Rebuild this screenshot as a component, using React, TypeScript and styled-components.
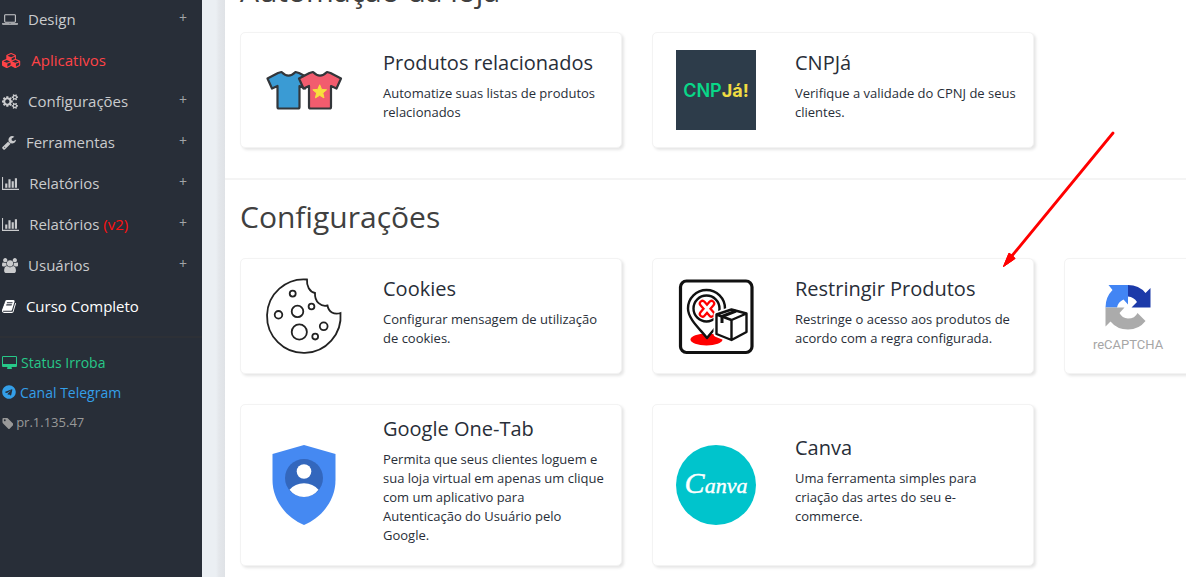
import React from "react";
import styled, { createGlobalStyle } from "styled-components";
import { FaTelegram } from "react-icons/fa";

const GlobalStyle = createGlobalStyle`
  * { box-sizing: border-box; }
  body {
    margin: 0;
    background: #fff;
    color: #282e38;
    font-family: "Open Sans", "Noto Sans", sans-serif;
    font-size: 13px;
  }
  a { color: inherit; text-decoration: none; }
`;

/* ---------- layout ---------- */

const Page = styled.div`
  display: flex;
  height: 100vh;
  overflow: hidden;
`;

const Sidebar = styled.aside`
  flex: none;
  width: 202px;
  background: #282e38;
`;

const Gutter = styled.div`
  flex: none;
  width: 23px;
  background: linear-gradient(to right, #ebeff3 0 14px, #e4e7eb 17px, #dfe2e6 23px);
`;

const Main = styled.main`
  flex: 1;
  min-width: 0;
  overflow: hidden;
`;

/* The list is scrolled, so its first heading is cut by the window's top. */
const Scrolled = styled.div`
  margin-top: -46px;
`;

/* ---------- sidebar ---------- */

const Menu = styled.ul`
  list-style: none;
  margin: 0;
  padding: 0 15px 8px 2px;
  border-bottom: 2px solid #2d3036;
`;

const MenuLink = styled.a<{ $tone?: string }>`
  display: flex;
  align-items: center;
  height: 41px;
  padding-bottom: 4px;
  gap: 10px;
  font-size: 15px;
  line-height: 20px;
  color: ${(p) => p.$tone ?? "#cacbcd"};
`;

const MenuText = styled.span`
  flex: 1;
  white-space: nowrap;
`;

const Version = styled.span`
  color: #f11;
`;

const Plus = styled.span`
  align-self: flex-start;
  margin-top: 8px;
  font-size: 14px;
  color: #a2a4a8;
`;

const Extras = styled.div`
  display: flex;
  flex-direction: column;
  padding: 9px 2px;
`;

const ExtraLink = styled.a<{ $tone: string; $small?: boolean }>`
  display: flex;
  align-items: center;
  gap: ${(p) => (p.$small ? 3 : 4)}px;
  height: 30px;
  font-size: ${(p) => (p.$small ? 13 : 14)}px;
  color: ${(p) => p.$tone};
`;

/* ---------- sections ---------- */

const Section = styled.section`
  padding: 12px 0 30px 15px;
  & + & {
    border-top: 2px solid #f4f4f4;
  }
`;

const Heading = styled.h2`
  margin: 0 0 22px;
  padding-top: 6px;
  font-size: 30px;
  line-height: 38px;
  font-weight: 400;
  color: #404040;
`;

const Grid = styled.div`
  display: grid;
  grid-template-columns: repeat(3, 382px);
  gap: 30px;
`;

const Card = styled.a`
  position: relative;
  display: flex;
  align-items: center;
  min-height: 116px;
  padding: 13px 16px 13px 23px;
  border: 1px solid #f3f3f3;
  border-radius: 5px;
  background: #fff;
  box-shadow: 2px 2px 3px #e6e6e6;
`;

const Picture = styled.div`
  flex: none;
  width: 80px;
  height: 80px;
  margin-right: 39px;
  svg { display: block; }
`;

const CardTitle = styled.h3`
  margin: 0 0 10px;
  font-size: 20px;
  line-height: 22px;
  font-weight: 400;
`;

const CardText = styled.p`
  margin: 0 0 7px;
  font-size: 13px;
  line-height: 19px;
`;

const Pointer = styled.svg`
  position: absolute;
  top: -130px;
  right: -88px;
  z-index: 1;
  pointer-events: none;
`;

/* ---------- menu icons ---------- */

type Glyph = { w: number; d: string; x?: number };

const glyphs: Record<string, Glyph> = {
  laptop: {
    w: 1920,
    d: "M416 1280q-66 0-113-47t-47-113v-704q0-66 47-113t113-47h1088q66 0 113 47t47 113v704q0 66-47 113t-113 47h-1088zm-32-864v704q0 13 9.5 22.5t22.5 9.5h1088q13 0 22.5-9.5t9.5-22.5v-704q0-13-9.5-22.5t-22.5-9.5h-1088q-13 0-22.5 9.5t-9.5 22.5zm1376 928h160v96q0 40-47 68t-113 28h-1600q-66 0-113-28t-47-68v-96h1760zm-720 96q16 0 16-16t-16-16h-160q-16 0-16 16t16 16h160z",
  },
  cubes: {
    w: 2304,
    d: "M640 1632l384-192v-314l-384 164v342zm-64-454l404-173-404-173-404 173zm1088 454l384-192v-314l-384 164v342zm-64-454l404-173-404-173-404 173zm-448-293l384-165v-266l-384 164v267zm-64-379l441-189-441-189-441 189zm1088 518v416q0 36-19 67t-52 47l-448 224q-25 14-57 14t-57-14l-448-224q-4-2-7-4-2 2-7 4l-448 224q-25 14-57 14t-57-14l-448-224q-33-16-52-47t-19-67v-416q0-38 21.5-70t56.5-48l434-186v-400q0-38 21.5-70t56.5-48l448-192q23-10 50-10t50 10l448 192q35 16 56.5 48t21.5 70v400l434 186q36 16 57 48t21 70z",
  },
  cogs: {
    w: 1920,
    d: "M896 896q0-106-75-181t-181-75-181 75-75 181 75 181 181 75 181-75 75-181zm768 512q0-52-38-90t-90-38-90 38-38 90q0 53 37.5 90.5t90.5 37.5 90.5-37.5 37.5-90.5zm0-1024q0-52-38-90t-90-38-90 38-38 90q0 53 37.5 90.5t90.5 37.5 90.5-37.5 37.5-90.5zm-384 421v185q0 10-7 19.5t-16 10.5l-155 24q-11 35-32 76 34 48 90 115 7 11 7 20 0 12-7 19-23 30-82.5 89.5t-78.5 59.5q-11 0-21-7l-115-90q-37 19-77 31-11 108-23 155-7 24-30 24h-186q-11 0-20-7.5t-10-17.5l-23-153q-34-10-75-31l-118 89q-7 7-20 7-11 0-21-8-144-133-144-160 0-9 7-19 10-14 41-53t47-61q-23-44-35-82l-152-24q-10-1-17-9.5t-7-19.5v-185q0-10 7-19.5t16-10.5l155-24q11-35 32-76-34-48-90-115-7-11-7-20 0-12 7-20 22-30 82-89t79-59q11 0 21 7l115 90q34-18 77-32 11-108 23-154 7-24 30-24h186q11 0 20 7.5t10 17.5l23 153q34 10 75 31l118-89q8-7 20-7 11 0 21 8 144 133 144 160 0 8-7 19-12 16-42 54t-45 60q23 48 34 82l152 23q10 2 17 10.5t7 19.5zm640 533v140q0 16-149 31-12 27-30 52 51 113 51 138 0 4-4 7-122 71-124 71-8 0-46-47t-52-68q-20 2-30 2t-30-2q-14 21-52 68t-46 47q-2 0-124-71-4-3-4-7 0-25 51-138-18-25-30-52-149-15-149-31v-140q0-16 149-31 13-29 30-52-51-113-51-138 0-4 4-7 4-2 35-20t59-34 30-16q8 0 46 46.5t52 67.5q20-2 30-2t30 2q51-71 92-112l6-2q4 0 124 70 4 3 4 7 0 25-51 138 17 23 30 52 149 15 149 31zm0-1024v140q0 16-149 31-12 27-30 52 51 113 51 138 0 4-4 7-122 71-124 71-8 0-46-47t-52-68q-20 2-30 2t-30-2q-14 21-52 68t-46 47q-2 0-124-71-4-3-4-7 0-25 51-138-18-25-30-52-149-15-149-31v-140q0-16 149-31 13-29 30-52-51-113-51-138 0-4 4-7 4-2 35-20t59-34 30-16q8 0 46 46.5t52 67.5q20-2 30-2t30 2q51-71 92-112l6-2q4 0 124 70 4 3 4 7 0 25-51 138 17 23 30 52 149 15 149 31z",
  },
  wrench: {
    w: 1664,
    x: 64,
    d: "M448 1472q0-26-19-45t-45-19-45 19-19 45 19 45 45 19 45-19 19-45zm644-420l-682 682q-37 37-90 37-52 0-91-37l-106-108q-38-36-38-90 0-53 38-91l681-681q39 98 114.5 173.5t173.5 114.5zm634-435q0 39-23 106-47 134-164.5 217.5t-258.5 83.5q-185 0-316.5-131.5t-131.5-316.5 131.5-316.5 316.5-131.5q58 0 121.5 16.5t107.5 46.5q16 11 16 28t-16 28l-293 169v224l193 107q5-3 79-48.5t135.5-81 70.5-35.5q15 0 23.5 10t8.5 25z",
  },
  chart: {
    w: 2048,
    d: "M640 896v512h-256v-512h256zm384-512v1024h-256v-1024h256zm1024 1152v128h-2048v-1536h128v1408h1920zm-640-896v768h-256v-768h256zm384-384v1152h-256v-1152h256z",
  },
  users: {
    w: 1920,
    d: "M593 896q-162 5-265 128h-134q-82 0-138-40.5t-56-118.5q0-353 124-353 6 0 43.5 21t97.5 42.5 119 21.5q67 0 133-23-5 37-5 66 0 159 93 256zm1071 637q0 120-73 189.5t-194 69.5h-874q-121 0-194-69.5t-73-189.5q0-53 3.5-103.5t14-109 26.5-108.5 43-97.5 62-81 85.5-53.5 111.5-20q10 0 43 21.5t73 48 107 48 135 21.5 135-21.5 107-48 73-48 43-21.5q61 0 111.5 20t85.5 53.5 62 81 43 97.5 26.5 108.5 14 109 3.5 103.5zm-1024-1277q0 106-75 181t-181 75-181-75-75-181 75-181 181-75 181 75 75 181zm704 384q0 159-112.5 271.5t-271.5 112.5-271.5-112.5-112.5-271.5 112.5-271.5 271.5-112.5 271.5 112.5 112.5 271.5zm576 225q0 78-56 118.5t-138 40.5h-134q-103-123-265-128 93-97 93-256 0-29-5-66 66 23 133 23 59 0 119-21.5t97.5-42.5 43.5-21q124 0 124 353zm-128-609q0 106-75 181t-181 75-181-75-75-181 75-181 181-75 181 75 75 181z",
  },
  book: {
    w: 1664,
    x: 64,
    d: "M1703 478q40 57 18 129l-275 906q-19 64-76.5 107.5t-122.5 43.5h-923q-77 0-148.5-53.5t-99.5-131.5q-24-67-2-127 0-4 3-27t4-37q1-8-3-21.5t-3-19.5q2-11 8-21t16.5-23.5 16.5-23.5q23-38 45-91.5t30-91.5q3-10 .5-30t-.5-28q3-11 17-28t17-23q21-36 42-92t25-90q1-9-2.5-32t.5-28q4-13 22-30.5t22-22.5q19-26 42.5-84.5t27.5-96.5q1-8-3-25.5t-2-26.5q2-8 9-18t18-23 17-21q8-12 16.5-30.5t15-35 16-36 19.5-32 26.5-23.5 36-11.5 47.5 5.5l-1 3q38-9 51-9h761q74 0 114 56t18 130l-274 906q-36 119-71.5 153.5t-128.5 34.5h-869q-27 0-38 15-11 16-1 43 24 70 144 70h923q29 0 56-15.5t35-41.5l300-987q7-22 5-57 38 15 59 43zm-1064 2q-4 13 2 22.5t20 9.5h608q13 0 25.5-9.5t16.5-22.5l21-64q4-13-2-22.5t-20-9.5h-608q-13 0-25.5 9.5t-16.5 22.5zm-83 256q-4 13 2 22.5t20 9.5h608q13 0 25.5-9.5t16.5-22.5l21-64q4-13-2-22.5t-20-9.5h-608q-13 0-25.5 9.5t-16.5 22.5z",
  },
  desktop: {
    w: 1920,
    d: "M1792 992v-832q0-13-9.5-22.5t-22.5-9.5h-1600q-13 0-22.5 9.5t-9.5 22.5v832q0 13 9.5 22.5t22.5 9.5h1600q13 0 22.5-9.5t9.5-22.5zm128-832v1088q0 66-47 113t-113 47h-544q0 37 16 77.5t32 71 16 43.5q0 26-19 45t-45 19h-512q-26 0-45-19t-19-45q0-14 16-44t32-70 16-78h-544q-66 0-113-47t-47-113v-1088q0-66 47-113t113-47h1600q66 0 113 47t47 113z",
  },
  tag: {
    w: 1536,
    x: 64,
    d: "M576 448q0-53-37.5-90.5t-90.5-37.5-90.5 37.5-37.5 90.5 37.5 90.5 90.5 37.5 90.5-37.5 37.5-90.5zm1067 576q0 53-37 90l-491 492q-39 37-91 37-53 0-90-37l-715-716q-38-37-64.5-101t-26.5-117v-416q0-52 38-90t90-38h416q53 0 117 26.5t102 64.5l715 714q37 39 37 91z",
  },
};

const GlyphSvg = styled.svg`
  flex: none;
  display: block;
  margin-top: 2px;
`;

function Icon({ name, size = 15 }: { name: string; size?: number }) {
  const g = glyphs[name];
  return (
    <GlyphSvg
      width={(g.w / 1792) * size}
      height={size}
      viewBox={`${g.x ?? 0} 0 ${g.w} 1792`}
      fill="currentColor"
      aria-hidden="true"
    >
      <path d={g.d} />
    </GlyphSvg>
  );
}

/* ---------- app pictures ---------- */

const shirt =
  "M12 1.5 L1.5 7 L6 17 L11.5 14.500 V35.500 Q11.500 37 13 37 H32 Q33.500 37 33.500 35.500 V14.500 L39 17 L43.500 7 L33 1.500 L29.500 0.500 Q22.500 7.500 15.500 0.500 Z";

const Shirts = () => (
  <svg width="80" height="80" viewBox="0 0 80 80" aria-hidden="true">
    <g stroke="#33363a" strokeWidth="2.200" strokeLinejoin="round">
      <path d={shirt} fill="#3a9bd4" transform="translate(2 21.500)" />
      <path d={shirt} fill="#f25c6e" transform="translate(33.500 21.500)" />
    </g>
    <path
      fill="#f8df3c"
      stroke="#f8df3c"
      strokeLinejoin="round"
      d="M55.700 34.800l1.900 4.600 5 .4-3.800 3.200 1.200 4.900-4.300-2.600-4.300 2.600 1.200-4.900-3.800-3.200 5-.4z"
    />
  </svg>
);

const CnpjLogo = () => (
  <svg width="80" height="80" viewBox="0 0 80 80" aria-hidden="true">
    <rect width="80" height="80" fill="#2d3c4a" />
    <text x="40" y="46.500" textAnchor="middle" fontFamily="Inter, sans-serif" fontSize="18" fontWeight="600" fill="#09d788">
      CNP
      <tspan fill="#f0dc43" fontWeight="700">Já!</tspan>
    </text>
  </svg>
);

const Cookie = () => (
  <svg width="80" height="80" viewBox="0 0 80 80" fill="none" stroke="#222" strokeWidth="1.800" aria-hidden="true">
    <path d="M43 3.500 A36.800 36.800 0 1 0 76.500 37 C70 39 64.500 36 63.500 29.500 C57 31 50.500 26 51 17 C45.500 16 42.500 10 43 3.500 Z" />
    <circle cx="28.700" cy="17.600" r="3" />
    <circle cx="33.500" cy="35.400" r="5.800" />
    <circle cx="47.500" cy="30.500" r="2.900" />
    <circle cx="14.500" cy="38.800" r="3.800" />
    <circle cx="35.300" cy="56" r="7.600" />
    <circle cx="59.700" cy="50.300" r="3.900" />
    <circle cx="51.200" cy="60.600" r="2.900" />
  </svg>
);

const Restrict = () => (
  <svg width="80" height="80" viewBox="0 0 80 80" fill="none" strokeLinejoin="round" aria-hidden="true">
    <rect x="4.500" y="5" width="71.500" height="71.500" rx="6" stroke="#111" strokeWidth="3.200" />
    <ellipse cx="30.500" cy="63.500" rx="16" ry="6" fill="#f00" />
    <path
      d="M31 62 C24 53 12 43 12 32.500 A18.500 18.500 0 0 1 49 32.500 C49 43 38 53 31 62Z"
      fill="#fff"
      stroke="#111"
      strokeWidth="2.400"
    />
    <circle cx="30.500" cy="32.500" r="13" stroke="#111" strokeWidth="2.400" />
    <g strokeLinecap="round">
      <path d="M26.500 27.500l9 10.500m0-10.500l-9 10.500" stroke="#f00" strokeWidth="7.500" />
      <path d="M26.500 27.500l9 10.500m0-10.500l-9 10.500" stroke="#fff" strokeWidth="3" />
    </g>
    <path d="M40.500 38.500l15-5 15 4v18.500l-15 8-15-6z" fill="#fff" stroke="#fff" strokeWidth="6" />
    <path
      d="M40.500 38.500l15-5 15 4v18.500l-15 8-15-6z M40.500 38.500l15 5.500 15-6.500 M55.500 44v20"
      stroke="#111"
      strokeWidth="2.400"
    />
    <path d="M46 40.500l14-5.500 M46 40v7" stroke="#111" strokeWidth="3" />
  </svg>
);

const Recaptcha = () => (
  <svg width="80" height="80" viewBox="0 0 80 80" aria-hidden="true">
    <path fill="#4285f4" d="M20.500 9H40V28.500L35.500 23.500Q30 26 29 31.500H17.500Q17.500 21 24.500 14Z" />
    <path fill="#1c3aa9" d="M40 9Q51 9 57.500 17L62.500 12V31.500H43.500L49 26Q46 21 40 20.500Z" />
    <path fill="#ababab" d="M17.500 31.500H36.500L31.500 37Q34 42 40 42.500Q47 42.500 49.500 37L57.500 45Q51 53.500 40 53.500Q29 53.500 22.500 45.500L17.500 50.500Z" />
    <text x="40" y="72.500" textAnchor="middle" fontFamily="Roboto, sans-serif" fontSize="13" fill="#a6a6a6">
      reCAPTCHA
    </text>
  </svg>
);

const Shield = () => (
  <svg width="80" height="80" viewBox="0 0 80 80" aria-hidden="true">
    <path fill="#4589f2" d="M40 0L71.500 9V35C71.500 56 57 73 40 80C23 73 8.500 56 8.500 35V9Z" />
    <circle cx="40" cy="33" r="19" fill="#3367bd" />
    <circle cx="40" cy="26.500" r="7.300" fill="#fff" />
    <path fill="#fff" d="M25.500 44.800Q31 38.200 40 38.200T54.500 44.800Q49 52 40 52T25.500 44.800Z" />
  </svg>
);

const Canva = () => (
  <svg width="80" height="80" viewBox="0 0 80 80" aria-hidden="true">
    <circle cx="40" cy="40" r="40" fill="#00c4cc" />
    <text
      x="40"
      y="48"
      textAnchor="middle"
      fontFamily='"Liberation Serif", serif'
      fontStyle="italic"
      fontSize="22"
      fill="#fff"
      stroke="#fff"
      strokeWidth="0.400"
    >
      <tspan fontSize="30">C</tspan>anva
    </text>
  </svg>
);

/* ---------- data ---------- */

const menu = [
  { icon: "laptop", label: "Design", more: true },
  { icon: "cubes", label: "Aplicativos", tone: "#ff4347" },
  { icon: "cogs", label: "Configurações", more: true },
  { icon: "wrench", label: "Ferramentas", more: true },
  { icon: "chart", label: "Relatórios", more: true },
  { icon: "chart", label: "Relatórios", version: "(v2)", more: true },
  { icon: "users", label: "Usuários", more: true },
  { icon: "book", label: "Curso Completo", tone: "#fff" },
];

const sections = [
  {
    title: "Automação da loja",
    apps: [
      { picture: <Shirts />, title: "Produtos relacionados", text: "Automatize suas listas de produtos relacionados" },
      { picture: <CnpjLogo />, title: "CNPJá", text: "Verifique a validade do CPNJ de seus clientes." },
    ],
  },
  {
    title: "Configurações",
    apps: [
      { picture: <Cookie />, title: "Cookies", text: "Configurar mensagem de utilização de cookies." },
      {
        picture: <Restrict />,
        title: "Restringir Produtos",
        text: "Restringe o acesso aos produtos de acordo com a regra configurada.",
        pointed: true,
      },
      { picture: <Recaptcha />, title: "", text: "" },
      {
        picture: <Shield />,
        title: "Google One-Tab",
        text: "Permita que seus clientes loguem e sua loja virtual em apenas um clique com um aplicativo para Autenticação do Usuário pelo Google.",
      },
      { picture: <Canva />, title: "Canva", text: "Uma ferramenta simples para criação das artes do seu e-commerce." },
    ],
  },
];

type AppInfo = { picture: React.ReactNode; title: string; text: string; pointed?: boolean };

function AppCard({ picture, title, text, pointed }: AppInfo) {
  return (
    <Card href="#" aria-label={title || "reCAPTCHA"}>
      <Picture>{picture}</Picture>
      {title && (
        <div>
          <CardTitle>{title}</CardTitle>
          <CardText>{text}</CardText>
        </div>
      )}
      {pointed && (
        <Pointer width="120" height="140" viewBox="0 0 120 140" aria-hidden="true">
          <path d="M112 4L10 128" stroke="#f00" strokeWidth="2.800" strokeLinecap="round" />
          <path d="M2.500 137.500L8 124L14 129.500L13.500 130Z M8 124.500L10.500 125.500L14 129.500L2.500 137.500Z" fill="#f00" stroke="#f00" />
        </Pointer>
      )}
    </Card>
  );
}

export default function App() {
  return (
    <Page>
      <GlobalStyle />
      <Sidebar>
        <nav>
          <Menu>
            {menu.map((m, i) => (
              <li key={i}>
                <MenuLink href="#" $tone={m.tone}>
                  <Icon name={m.icon} />
                  <MenuText>
                    {m.label} {m.version && <Version>{m.version}</Version>}
                  </MenuText>
                  {m.more && <Plus>+</Plus>}
                </MenuLink>
              </li>
            ))}
          </Menu>
          <Extras>
            <ExtraLink href="#" $tone="#27c888">
              <Icon name="desktop" size={14} />
              Status Irroba
            </ExtraLink>
            <ExtraLink href="#" $tone="#349fe8">
              <FaTelegram size={14} />
              Canal Telegram
            </ExtraLink>
            <ExtraLink href="#" $tone="#999" $small>
              <Icon name="tag" size={13} />
              pr.1.135.47
            </ExtraLink>
          </Extras>
        </nav>
      </Sidebar>
      <Gutter />
      <Main>
        <Scrolled>
          {sections.map((s) => (
            <Section key={s.title}>
              <Heading>{s.title}</Heading>
              <Grid>
                {s.apps.map((a) => (
                  <AppCard key={a.title} {...a} />
                ))}
              </Grid>
            </Section>
          ))}
        </Scrolled>
      </Main>
    </Page>
  );
}
